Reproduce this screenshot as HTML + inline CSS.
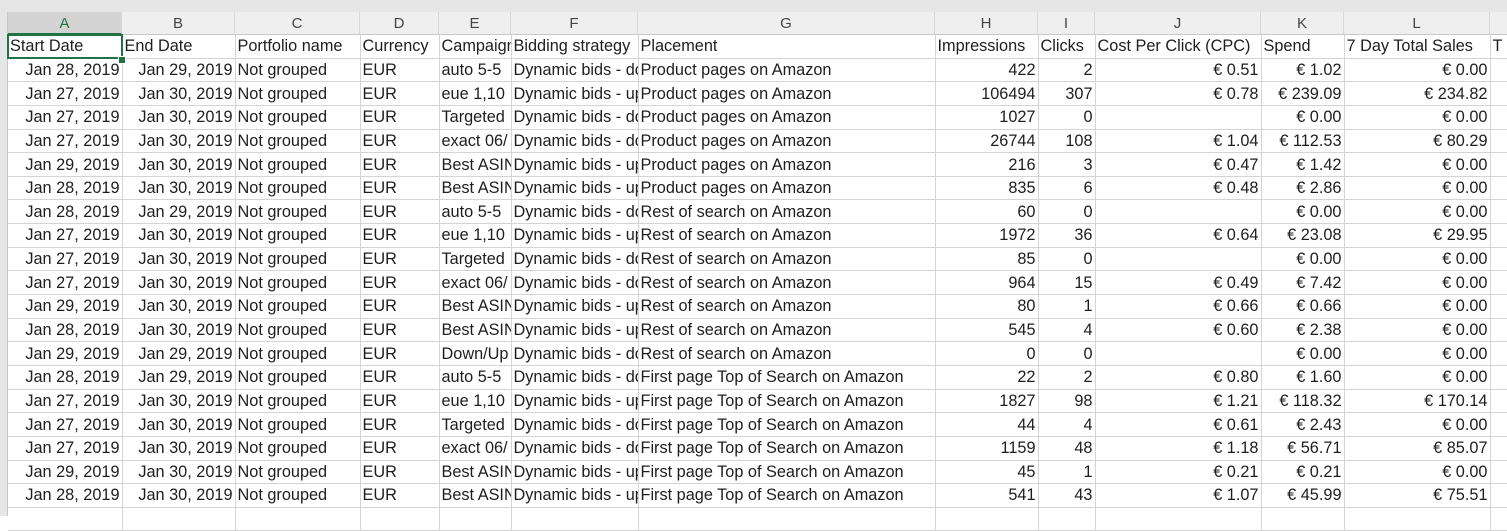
<!DOCTYPE html>
<html><head><meta charset="utf-8"><style>
html,body{margin:0;padding:0;width:1507px;height:516px;overflow:hidden;background:#fff;font-family:"Liberation Sans",Arial,sans-serif;}
.top{position:absolute;left:0;top:0;width:1507px;height:12px;background:#e6e6e6;}
.colh{position:absolute;top:12px;height:23px;background:#efefef;border-bottom:1px solid #c8c8c8;box-sizing:border-box;border-right:1px solid #d8d8d8;text-align:center;font-size:15px;line-height:23px;color:#444;}
.rowh{position:absolute;left:0;top:12px;width:8px;height:504px;background:#e6e6e6;border-right:1px solid #c8c8c8;box-sizing:border-box;}
table{position:absolute;left:8px;top:35px;width:1512px;border-collapse:collapse;table-layout:fixed;font-size:16.3px;color:#1e1e1e;}
td{height:22.65px;padding:0 2px;border-right:1px solid #d4d4d4;border-bottom:1px solid #d4d4d4;white-space:nowrap;overflow:hidden;line-height:22px;}
td.r{text-align:right;}
.sel{position:absolute;left:7px;top:34px;width:116px;height:25px;border:2px solid #217346;box-sizing:border-box;}
.hnd{position:absolute;left:118px;top:56px;width:6px;height:6px;background:#217346;border:1px solid #fff;}
</style></head><body>
<div class="top"></div>
<div class="rowh"></div>
<div class="colh" style="left:8px;width:114px;background:#d3d3d3;color:#217346;border-bottom:2px solid #217346">A</div>
<div class="colh" style="left:122px;width:113px">B</div>
<div class="colh" style="left:235px;width:125px">C</div>
<div class="colh" style="left:360px;width:79px">D</div>
<div class="colh" style="left:439px;width:72px">E</div>
<div class="colh" style="left:511px;width:127px">F</div>
<div class="colh" style="left:638px;width:297px">G</div>
<div class="colh" style="left:935px;width:103px">H</div>
<div class="colh" style="left:1038px;width:57px">I</div>
<div class="colh" style="left:1095px;width:166px">J</div>
<div class="colh" style="left:1261px;width:83px">K</div>
<div class="colh" style="left:1344px;width:146px">L</div>
<div class="colh" style="left:1490px;width:30px"></div>
<table>
<colgroup><col style="width:114px"><col style="width:113px"><col style="width:125px"><col style="width:79px"><col style="width:72px"><col style="width:127px"><col style="width:297px"><col style="width:103px"><col style="width:57px"><col style="width:166px"><col style="width:83px"><col style="width:146px"><col style="width:30px"></colgroup>
<tr><td>Start Date</td><td>End Date</td><td>Portfolio name</td><td>Currency</td><td>Campaign Name</td><td>Bidding strategy</td><td>Placement</td><td>Impressions</td><td>Clicks</td><td>Cost Per Click (CPC)</td><td>Spend</td><td>7 Day Total Sales</td><td>T</td></tr>
<tr><td class="r">Jan 28, 2019</td><td class="r">Jan 29, 2019</td><td>Not grouped</td><td>EUR</td><td>auto 5-5</td><td>Dynamic bids - down</td><td>Product pages on Amazon</td><td class="r">422</td><td class="r">2</td><td class="r">€ 0.51</td><td class="r">€ 1.02</td><td class="r">€ 0.00</td><td></td></tr>
<tr><td class="r">Jan 27, 2019</td><td class="r">Jan 30, 2019</td><td>Not grouped</td><td>EUR</td><td>eue 1,10</td><td>Dynamic bids - up</td><td>Product pages on Amazon</td><td class="r">106494</td><td class="r">307</td><td class="r">€ 0.78</td><td class="r">€ 239.09</td><td class="r">€ 234.82</td><td></td></tr>
<tr><td class="r">Jan 27, 2019</td><td class="r">Jan 30, 2019</td><td>Not grouped</td><td>EUR</td><td>Targeted</td><td>Dynamic bids - down</td><td>Product pages on Amazon</td><td class="r">1027</td><td class="r">0</td><td class="r"></td><td class="r">€ 0.00</td><td class="r">€ 0.00</td><td></td></tr>
<tr><td class="r">Jan 27, 2019</td><td class="r">Jan 30, 2019</td><td>Not grouped</td><td>EUR</td><td>exact 06/</td><td>Dynamic bids - down</td><td>Product pages on Amazon</td><td class="r">26744</td><td class="r">108</td><td class="r">€ 1.04</td><td class="r">€ 112.53</td><td class="r">€ 80.29</td><td></td></tr>
<tr><td class="r">Jan 29, 2019</td><td class="r">Jan 30, 2019</td><td>Not grouped</td><td>EUR</td><td>Best ASIN</td><td>Dynamic bids - up</td><td>Product pages on Amazon</td><td class="r">216</td><td class="r">3</td><td class="r">€ 0.47</td><td class="r">€ 1.42</td><td class="r">€ 0.00</td><td></td></tr>
<tr><td class="r">Jan 28, 2019</td><td class="r">Jan 30, 2019</td><td>Not grouped</td><td>EUR</td><td>Best ASIN</td><td>Dynamic bids - up</td><td>Product pages on Amazon</td><td class="r">835</td><td class="r">6</td><td class="r">€ 0.48</td><td class="r">€ 2.86</td><td class="r">€ 0.00</td><td></td></tr>
<tr><td class="r">Jan 28, 2019</td><td class="r">Jan 29, 2019</td><td>Not grouped</td><td>EUR</td><td>auto 5-5</td><td>Dynamic bids - down</td><td>Rest of search on Amazon</td><td class="r">60</td><td class="r">0</td><td class="r"></td><td class="r">€ 0.00</td><td class="r">€ 0.00</td><td></td></tr>
<tr><td class="r">Jan 27, 2019</td><td class="r">Jan 30, 2019</td><td>Not grouped</td><td>EUR</td><td>eue 1,10</td><td>Dynamic bids - up</td><td>Rest of search on Amazon</td><td class="r">1972</td><td class="r">36</td><td class="r">€ 0.64</td><td class="r">€ 23.08</td><td class="r">€ 29.95</td><td></td></tr>
<tr><td class="r">Jan 27, 2019</td><td class="r">Jan 30, 2019</td><td>Not grouped</td><td>EUR</td><td>Targeted</td><td>Dynamic bids - down</td><td>Rest of search on Amazon</td><td class="r">85</td><td class="r">0</td><td class="r"></td><td class="r">€ 0.00</td><td class="r">€ 0.00</td><td></td></tr>
<tr><td class="r">Jan 27, 2019</td><td class="r">Jan 30, 2019</td><td>Not grouped</td><td>EUR</td><td>exact 06/</td><td>Dynamic bids - down</td><td>Rest of search on Amazon</td><td class="r">964</td><td class="r">15</td><td class="r">€ 0.49</td><td class="r">€ 7.42</td><td class="r">€ 0.00</td><td></td></tr>
<tr><td class="r">Jan 29, 2019</td><td class="r">Jan 30, 2019</td><td>Not grouped</td><td>EUR</td><td>Best ASIN</td><td>Dynamic bids - up</td><td>Rest of search on Amazon</td><td class="r">80</td><td class="r">1</td><td class="r">€ 0.66</td><td class="r">€ 0.66</td><td class="r">€ 0.00</td><td></td></tr>
<tr><td class="r">Jan 28, 2019</td><td class="r">Jan 30, 2019</td><td>Not grouped</td><td>EUR</td><td>Best ASIN</td><td>Dynamic bids - up</td><td>Rest of search on Amazon</td><td class="r">545</td><td class="r">4</td><td class="r">€ 0.60</td><td class="r">€ 2.38</td><td class="r">€ 0.00</td><td></td></tr>
<tr><td class="r">Jan 29, 2019</td><td class="r">Jan 29, 2019</td><td>Not grouped</td><td>EUR</td><td>Down/Up</td><td>Dynamic bids - down</td><td>Rest of search on Amazon</td><td class="r">0</td><td class="r">0</td><td class="r"></td><td class="r">€ 0.00</td><td class="r">€ 0.00</td><td></td></tr>
<tr><td class="r">Jan 28, 2019</td><td class="r">Jan 29, 2019</td><td>Not grouped</td><td>EUR</td><td>auto 5-5</td><td>Dynamic bids - down</td><td>First page Top of Search on Amazon</td><td class="r">22</td><td class="r">2</td><td class="r">€ 0.80</td><td class="r">€ 1.60</td><td class="r">€ 0.00</td><td></td></tr>
<tr><td class="r">Jan 27, 2019</td><td class="r">Jan 30, 2019</td><td>Not grouped</td><td>EUR</td><td>eue 1,10</td><td>Dynamic bids - up</td><td>First page Top of Search on Amazon</td><td class="r">1827</td><td class="r">98</td><td class="r">€ 1.21</td><td class="r">€ 118.32</td><td class="r">€ 170.14</td><td></td></tr>
<tr><td class="r">Jan 27, 2019</td><td class="r">Jan 30, 2019</td><td>Not grouped</td><td>EUR</td><td>Targeted</td><td>Dynamic bids - down</td><td>First page Top of Search on Amazon</td><td class="r">44</td><td class="r">4</td><td class="r">€ 0.61</td><td class="r">€ 2.43</td><td class="r">€ 0.00</td><td></td></tr>
<tr><td class="r">Jan 27, 2019</td><td class="r">Jan 30, 2019</td><td>Not grouped</td><td>EUR</td><td>exact 06/</td><td>Dynamic bids - down</td><td>First page Top of Search on Amazon</td><td class="r">1159</td><td class="r">48</td><td class="r">€ 1.18</td><td class="r">€ 56.71</td><td class="r">€ 85.07</td><td></td></tr>
<tr><td class="r">Jan 29, 2019</td><td class="r">Jan 30, 2019</td><td>Not grouped</td><td>EUR</td><td>Best ASIN</td><td>Dynamic bids - up</td><td>First page Top of Search on Amazon</td><td class="r">45</td><td class="r">1</td><td class="r">€ 0.21</td><td class="r">€ 0.21</td><td class="r">€ 0.00</td><td></td></tr>
<tr><td class="r">Jan 28, 2019</td><td class="r">Jan 30, 2019</td><td>Not grouped</td><td>EUR</td><td>Best ASIN</td><td>Dynamic bids - up</td><td>First page Top of Search on Amazon</td><td class="r">541</td><td class="r">43</td><td class="r">€ 1.07</td><td class="r">€ 45.99</td><td class="r">€ 75.51</td><td></td></tr>
<tr><td></td><td></td><td></td><td></td><td></td><td></td><td></td><td></td><td></td><td></td><td></td><td></td><td></td></tr>
</table>
<div class="sel"></div>
<div class="hnd"></div>
</body></html>
